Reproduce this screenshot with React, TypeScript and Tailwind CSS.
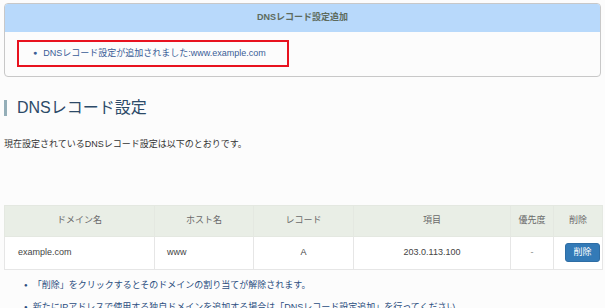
const font = "font-['Liberation_Sans','Noto_Sans_CJK_JP',sans-serif]";

type Row = { domain: string; host: string; record: string; item: string; priority: string };

const rows: Row[] = [
  { domain: "example.com", host: "www", record: "A", item: "203.0.113.100", priority: "-" },
];

export default function App() {
  return (
    <div className={`${font} min-h-[308px] bg-[#fcfcfc] px-[4px] pt-[3px] text-[9px] text-[#333]`}>
      {/* 追加結果パネル */}
      <div className="overflow-hidden rounded-[4px] border border-[#c8c8c8] bg-[#fcfcfc]">
        <div className="flex h-[28px] items-center justify-center bg-[#b8d9fb] font-bold text-[#5d6b5d]">
          DNSレコード設定追加
        </div>
        <div className="px-[12px] pb-[9px] pt-[8px]">
          <div className="flex h-[27px] w-[272px] items-center border-2 border-[#e8121f] pl-[14px] text-[#3a5d97]">
            <span className="mr-[6px] text-[7px]">●</span>
            DNSレコード設定が追加されました:www.example.com
          </div>
        </div>
      </div>

      {/* 見出し */}
      <div className="mt-[23px] flex h-[16px] items-center">
        <div className="h-[16px] w-[3px] bg-[#94aeb8]" />
        <h2 className="ml-[10px] text-[16px] leading-none text-[#2c4a68]">DNSレコード設定</h2>
      </div>

      <p className="mt-[22px]">現在設定されているDNSレコード設定は以下のとおりです。</p>

      {/* テーブル */}
      <table className="mt-[53px] w-[598px] table-fixed border-collapse text-[#444]">
        <colgroup>
          <col className="w-[150px]" />
          <col className="w-[99px]" />
          <col className="w-[100px]" />
          <col className="w-[157px]" />
          <col className="w-[43px]" />
          <col className="w-[49px]" />
        </colgroup>
        <thead>
          <tr className="h-[31px] bg-[#e9eee6] text-[#6a6a6a]">
            {["ドメイン名", "ホスト名", "レコード", "項目", "優先度", "削除"].map((h) => (
              <th key={h} className="border border-[#e4e8e1] text-center font-normal">
                {h}
              </th>
            ))}
          </tr>
        </thead>
        <tbody>
          {rows.map((r) => (
            <tr key={r.domain + r.host} className="h-[33px] bg-white">
              <td className="border border-[#e6e6e6] pl-[13px]">{r.domain}</td>
              <td className="border border-[#e6e6e6] pl-[12px]">{r.host}</td>
              <td className="border border-[#e6e6e6] text-center">{r.record}</td>
              <td className="border border-[#e6e6e6] text-center">{r.item}</td>
              <td className="border border-[#e6e6e6] text-center text-[#888]">{r.priority}</td>
              <td className="border border-[#e6e6e6] pr-[2px] text-right">
                <button className="h-[19px] w-[35px] rounded-[3px] border border-[#2e6da4] bg-[#337ab7] text-[9px] text-white">
                  削除
                </button>
              </td>
            </tr>
          ))}
        </tbody>
      </table>

      <ul className="mt-[10px] pl-[20px] text-[#2a4d7e]">
        <li className="flex h-[12px] items-center">
          <span className="mr-[5px] text-[6px]">●</span>
          「削除」をクリックするとそのドメインの割り当てが解除されます。
        </li>
        <li className="mt-[10px] flex h-[12px] items-center">
          <span className="mr-[5px] text-[6px]">●</span>
          新たにIPアドレスで使用する独自ドメインを追加する場合は「DNSレコード設定追加」を行ってください。
        </li>
      </ul>
    </div>
  );
}
